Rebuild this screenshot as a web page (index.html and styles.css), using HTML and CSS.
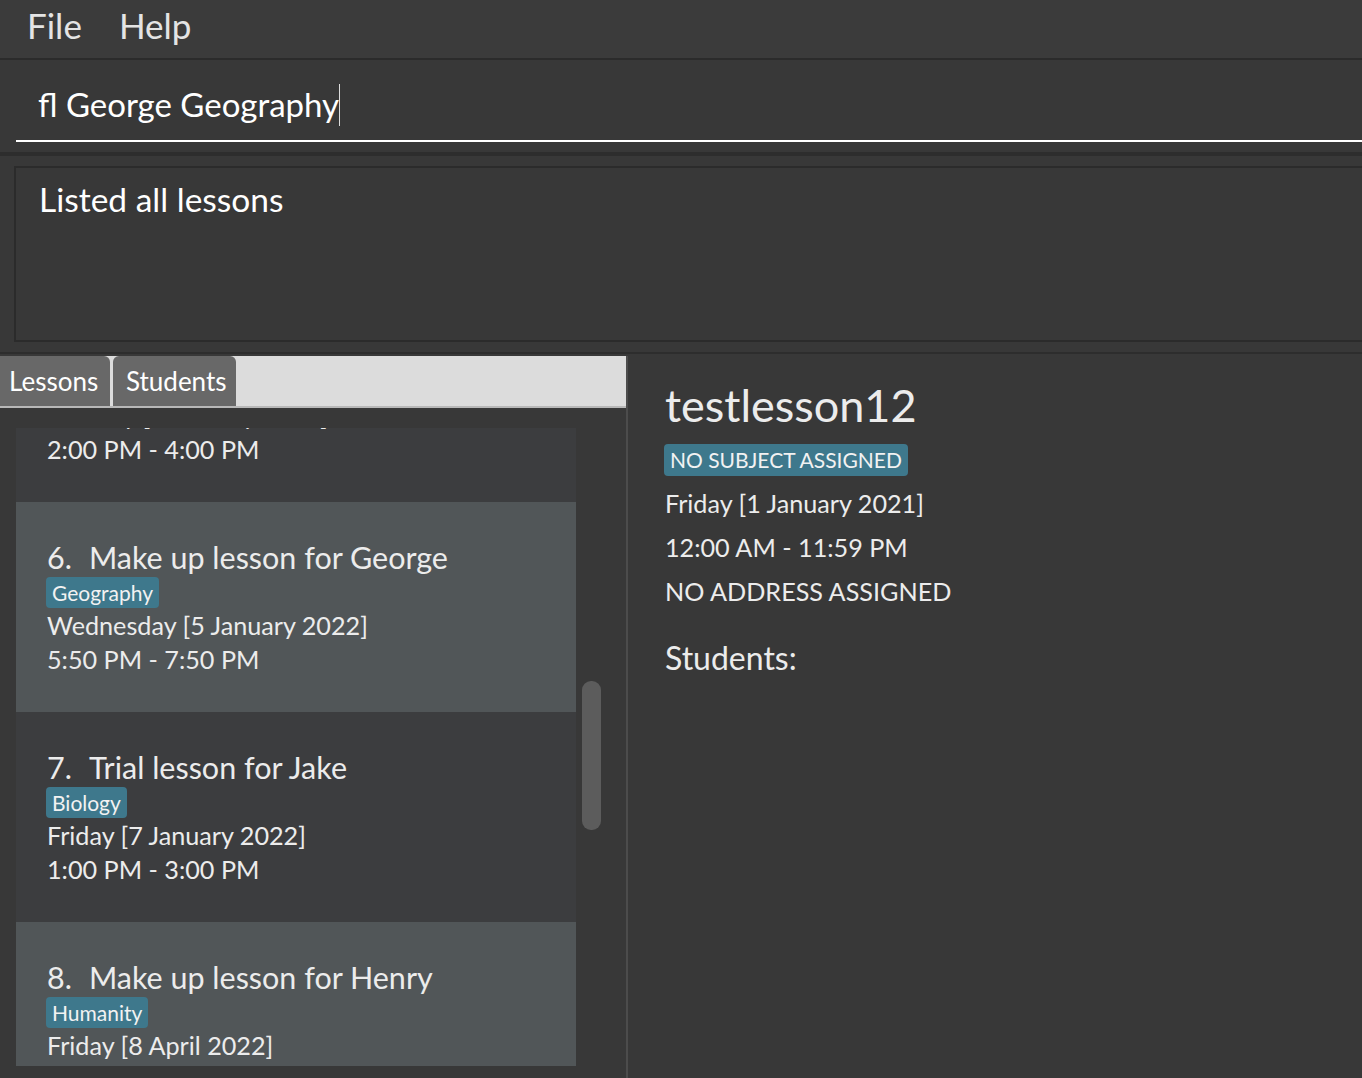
FILE: index.html
```html
<!DOCTYPE html>
<html lang="en">
<head>
<meta charset="utf-8">
<title>Lessons</title>
<link rel="stylesheet" href="styles.css">
</head>
<body>
<div class="app">
  <div class="menubar">
    <span class="menu-item">File</span>
    <span class="menu-item">Help</span>
  </div>
  <div class="command-area">
    <div class="command"><span class="command-text">fl George Geography</span><span class="caret"></span></div>
  </div>
  <div class="rule"></div>
  <div class="result-area">
    <div class="result">Listed all lessons</div>
  </div>
  <div class="rule-thin"></div>
  <div class="main">
    <div class="left">
      <div class="tabs">
        <div class="tab tab-lessons">Lessons</div>
        <div class="tab tab-students">Students</div>
      </div>
      <div class="list-area">
        <div class="viewport">
          <div class="list">
            <div class="cell cell-dark">
              <div class="title"><span class="idx">5.</span>Trial lesson for Alex</div>
              <div class="tag">Science</div>
              <div class="line">Tuesday [4 January 2022]</div>
              <div class="line">2:00 PM - 4:00 PM</div>
            </div>
            <div class="cell cell-light">
              <div class="title"><span class="idx">6.</span>Make up lesson for George</div>
              <div class="tag">Geography</div>
              <div class="line">Wednesday [5 January 2022]</div>
              <div class="line">5:50 PM - 7:50 PM</div>
            </div>
            <div class="cell cell-dark">
              <div class="title"><span class="idx">7.</span>Trial lesson for Jake</div>
              <div class="tag">Biology</div>
              <div class="line">Friday [7 January 2022]</div>
              <div class="line">1:00 PM - 3:00 PM</div>
            </div>
            <div class="cell cell-light">
              <div class="title"><span class="idx">8.</span>Make up lesson for Henry</div>
              <div class="tag">Humanity</div>
              <div class="line">Friday [8 April 2022]</div>
              <div class="line">3:00 PM - 5:00 PM</div>
            </div>
          </div>
        </div>
        <div class="scrollbar"><div class="thumb"></div></div>
      </div>
    </div>
    <div class="divider"></div>
    <div class="detail">
      <div class="detail-name">testlesson12</div>
      <div class="detail-tag">NO SUBJECT ASSIGNED</div>
      <div class="detail-line detail-first">Friday [1 January 2021]</div>
      <div class="detail-line">12:00 AM - 11:59 PM</div>
      <div class="detail-line">NO ADDRESS ASSIGNED</div>
      <div class="detail-students">Students:</div>
    </div>
  </div>
</div>
</body>
</html>
```

FILE: styles.css
```css
* { box-sizing: border-box; }

html, body {
  margin: 0;
  padding: 0;
  height: 100%;
  overflow: hidden;
  background: #383838;
  font-family: Lato, "Liberation Sans", sans-serif;
  color: #ececec;
}

.app {
  height: 100vh;
  display: flex;
  flex-direction: column;
}

.menubar {
  height: 60px;
  flex: none;
  background: #3b3b3b;
  border-bottom: 2px solid #2b2b2b;
  display: flex;
  align-items: flex-start;
  gap: 37px;
  padding-left: 27px;
}

.menu-item {
  font-size: 35px;
  line-height: 50px;
  color: #e4e4e4;
}

.command-area {
  flex: none;
  padding: 0 0 10px 16px;
}

.command {
  height: 82px;
  border-bottom: 2px solid #ffffff;
  padding: 23px 0 0 22px;
  display: flex;
  align-items: flex-start;
}

.command-text {
  font-size: 33px;
  line-height: 42px;
  color: #ffffff;
}

.caret {
  width: 1px;
  height: 42px;
  margin-top: 1px;
  background: #dddddd;
}

.rule {
  flex: none;
  height: 4px;
  background: #2d2d2d;
}

.result-area {
  flex: none;
  padding: 10px 0 10px 14px;
}

.result {
  height: 176px;
  width: calc(100% + 10px);
  border: 2px solid #2b2b2b;
  border-right: none;
  padding: 10px 0 0 23px;
  font-size: 33.5px;
  line-height: 42px;
  color: #ffffff;
}

.rule-thin {
  flex: none;
  height: 2px;
  background: #2d2d2d;
  margin-bottom: 2px;
}

.main {
  flex: 1;
  display: flex;
  min-height: 0;
}

.left {
  width: 626px;
  flex: none;
  display: flex;
  flex-direction: column;
}

.tabs {
  height: 52px;
  flex: none;
  background: #dcdcdc;
  border-bottom: 2px solid #b8b8b8;
  display: flex;
  gap: 3px;
}

.tab {
  height: 50px;
  background: #686868;
  border-radius: 6px 6px 0 0;
  color: #ffffff;
  font-size: 26px;
  line-height: 50px;
  white-space: nowrap;
}

.tab-lessons {
  width: 110px;
  padding-left: 9px;
  border-top-left-radius: 0;
}

.tab-students {
  width: 123px;
  padding-left: 13px;
}

.list-area {
  flex: 1;
  display: flex;
  align-items: flex-start;
  padding: 20px 0 0 16px;
}

.viewport {
  width: 560px;
  height: 638px;
  overflow: hidden;
  flex: none;
}

.list {
  margin-top: -136px;
}

.cell {
  height: 210px;
  padding: 37px 0 0 31px;
  display: flex;
  flex-direction: column;
  align-items: flex-start;
}

.cell-dark { background: #3c3d3f; }
.cell-light { background: #515658; }

.title {
  font-size: 30.5px;
  line-height: 36px;
  color: #ececec;
  white-space: nowrap;
}

.idx {
  margin-right: 17px;
}

.tag {
  margin: 2px 0 0 -1px;
  height: 31px;
  padding: 0 6px;
  background: #3e788c;
  border-radius: 4px;
  font-size: 21px;
  line-height: 31px;
  color: #f2f2f2;
}

.line {
  font-size: 25.2px;
  line-height: 34px;
  color: #ececec;
  white-space: nowrap;
}

.scrollbar {
  flex: none;
  width: 19px;
  margin-left: 6px;
  padding-top: 253px;
}

.thumb {
  height: 149px;
  border-radius: 9px;
  background: #5c5c5c;
}

.divider {
  width: 2px;
  flex: none;
  background: #4c4c4c;
}

.detail {
  flex: 1;
  padding: 21px 0 0 37px;
  display: flex;
  flex-direction: column;
  align-items: flex-start;
}

.detail-name {
  font-size: 45px;
  line-height: 56px;
  color: #ececec;
}

.detail-tag {
  margin: 11px 0 0 -1px;
  height: 32px;
  padding: 0 6px;
  background: #3e788c;
  border-radius: 4px;
  font-size: 21px;
  line-height: 32px;
  color: #f2f2f2;
}

.detail-line {
  font-size: 25.2px;
  line-height: 44px;
  color: #ececec;
}

.detail-first {
  margin-top: 5px;
}

.detail-students {
  margin-top: 23px;
  font-size: 32px;
  line-height: 44px;
  color: #ececec;
}
```
